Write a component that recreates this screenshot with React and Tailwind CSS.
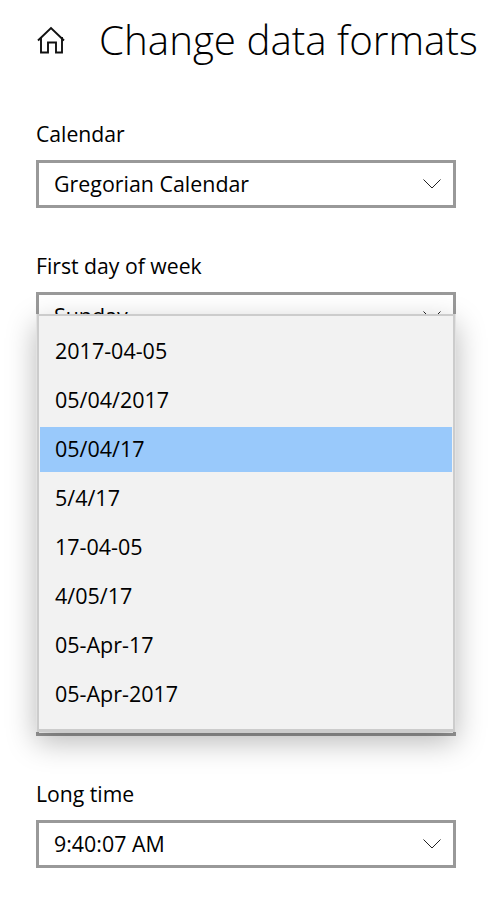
const Chevron = () => (
  <svg width="18" height="10" viewBox="0 0 18 10" fill="none" stroke="#222" strokeWidth="1" className="shrink-0">
    <path d="M0.5 0.5 L9 9 L17.5 0.5" />
  </svg>
);

const Box = ({ value, className = "" }) => (
  <div className={`flex h-[48px] w-[420px] items-center justify-between border-[3px] border-[#999999] bg-white pl-[15px] pr-[12px] text-[21.4px] text-black ${className}`}>
    <span>{value}</span>
    <Chevron />
  </div>
);

const Label = ({ children, className = "" }) => (
  <div className={`h-[32px] text-[21.2px] leading-[32px] text-black ${className}`}>{children}</div>
);

const items = ["2017-04-05", "05/04/2017", "05/04/17", "5/4/17", "17-04-05", "4/05/17", "05-Apr-17", "05-Apr-2017"];

export default function App() {
  return (
    <div className="relative h-[904px] w-[504px] overflow-hidden bg-white font-['Open_Sans','Noto_Sans',sans-serif] text-black">
      <div className="flex h-[118px] items-start pt-[12px] pl-[36px]">
        <svg width="30" height="28" viewBox="0 0 30 28" fill="none" stroke="#111" strokeWidth="1.9" className="mt-[14px] shrink-0">
          <path d="M2 14.5 L15 2 L28 14.5" />
          <path d="M5 11 V26.5 H12 V16.5 H20 V26.5 H26 V11" />
        </svg>
        <h1 className="ml-[33px] whitespace-nowrap text-[40.3px] leading-[56px] font-light">Change data formats</h1>
      </div>
      <div className="flex flex-col px-[36px]">
        <Label>Calendar</Label>
        <Box value="Gregorian Calendar" className="mt-[10px]" />
        <Label className="mt-[42px]">First day of week</Label>
        <Box value="Sunday" className="mt-[10px]" />
        <Box value="" className="mt-[348px]" />
        <Label className="mt-[42px]">Long time</Label>
        <Box value="9:40:07 AM" className="mt-[10px]" />
      </div>
      <div className="absolute top-[314px] left-[36px] h-[418px] w-[420px] bg-[#e2e2e2] px-px shadow-[0_10px_28px_rgba(0,0,0,0.28)]">
        <ul className="h-full border-x-2 border-t-2 border-b-[3px] border-[#cccccc] bg-[#f2f2f2] px-px pt-[13px]">
          {items.map((t, i) => (
            <li key={t} className={`mb-[4px] flex h-[45px] items-center pl-[15px] text-[21.5px] text-black ${i === 2 ? "bg-[#99c9fb]" : ""}`}>
              {t}
            </li>
          ))}
        </ul>
      </div>
    </div>
  );
}
